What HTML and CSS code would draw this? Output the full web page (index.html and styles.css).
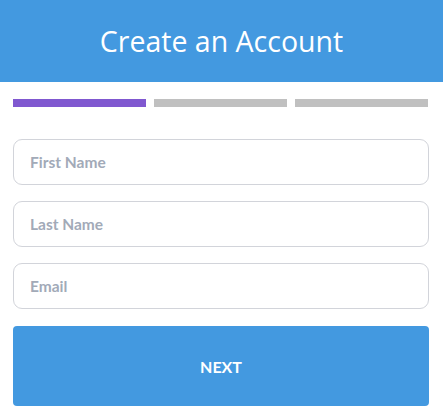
FILE: index.html
```html
<!doctype html>
<html>
<head>
<meta charset="UTF-8" />
<title>Create an Account</title>
<link rel="stylesheet" href="styles.css">
</head>
<body>
	<div id="header">
		<h1>Create an Account</h1>
	</div>
	<div id="steps">
		<span class="step active"></span>
		<span class="step"></span>
		<span class="step"></span>
	</div>
	<form id="form">
		<input type="text" class="field" placeholder="First Name"/>
		<input type="text" class="field" placeholder="Last Name"/>
		<input type="text" class="field" placeholder="Email"/>
		<a href="#" id="next">NEXT</a>
	</form>
</body>
</html>
```

FILE: styles.css
```css
html, body, h1, div, form, input, a{
	margin:0;
	padding:0;
	outline:0;
}
body{
	font-family: Lato, "Open Sans", sans-serif;
	background-color:#fff;
}
#header{
	height:82px;
	background-color:#4399e0;
	display:flex;
	align-items:center;
	justify-content:center;
}
#header h1{
	color:#fff;
	font-family:"Open Sans", sans-serif;
	font-weight:normal;
	font-size:28.5px;
	margin-top:-1px;
}
#steps{
	display:flex;
	gap:8px;
	padding:17px 15px 0 13px;
}
.step{
	flex:1;
	height:8px;
	background-color:#c0c0c0;
}
.step.active{
	background-color:#8058d0;
}
#form{
	display:flex;
	flex-direction:column;
	gap:16px;
	padding:32px 14px 0 13px;
}
.field{
	height:46px;
	box-sizing:border-box;
	border:1px solid #d2d4da;
	border-radius:9px;
	padding:0 16px;
	font-family:Lato, sans-serif;
	font-size:15.5px;
	color:#333;
}
.field::placeholder{
	color:#a2aab8;
	font-weight:bold;
}
#next{
	height:80px;
	margin-top:1px;
	display:flex;
	align-items:center;
	justify-content:center;
	background-color:#4399e0;
	border-radius:4px;
	color:#fff;
	font-weight:bold;
	font-size:16px;
	text-decoration:none;
}
```
